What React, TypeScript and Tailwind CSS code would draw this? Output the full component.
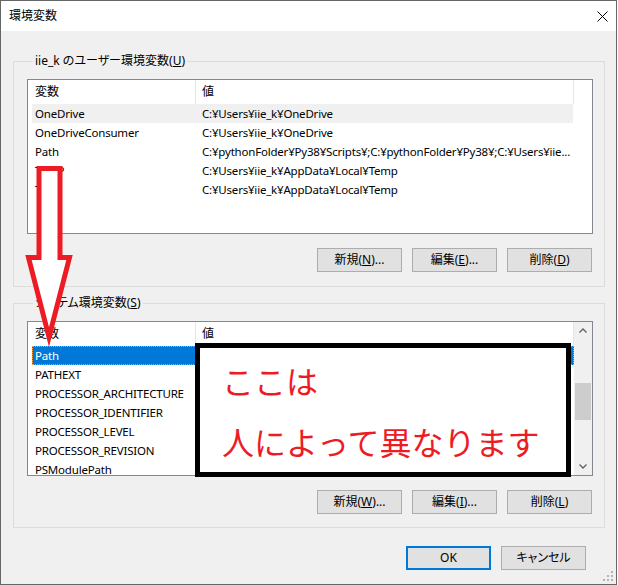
import type { ReactNode } from "react";

const ui = "font-['Noto_Sans','Noto_Sans_CJK_JP',sans-serif] [font-feature-settings:'palt']";

type Row = { name: string; value: string };

const userVars: Row[] = [
  { name: "OneDrive", value: "C:¥Users¥iie_k¥OneDrive" },
  { name: "OneDriveConsumer", value: "C:¥Users¥iie_k¥OneDrive" },
  { name: "Path", value: "C:¥pythonFolder¥Py38¥Scripts¥;C:¥pythonFolder¥Py38¥;C:¥Users¥iie..." },
  { name: "TEMP", value: "C:¥Users¥iie_k¥AppData¥Local¥Temp" },
  { name: "TMP", value: "C:¥Users¥iie_k¥AppData¥Local¥Temp" },
];

const systemVars: Row[] = [
  { name: "Path", value: "" },
  { name: "PATHEXT", value: "" },
  { name: "PROCESSOR_ARCHITECTURE", value: "" },
  { name: "PROCESSOR_IDENTIFIER", value: "" },
  { name: "PROCESSOR_LEVEL", value: "" },
  { name: "PROCESSOR_REVISION", value: "" },
  { name: "PSModulePath", value: "" },
];

function Key({ label, k, tail = "" }: { label: string; k: string; tail?: string }) {
  return (
    <>
      {label}(<span className="underline underline-offset-1">{k}</span>){tail}
    </>
  );
}

function Button({ children, primary }: { children: ReactNode; primary?: boolean }) {
  return (
    <button
      className={
        primary
          ? "w-[85px] h-[24px] bg-[#e1e1e1] border-2 border-[#0078d7] text-[12px] text-black"
          : "w-[85px] h-[24px] bg-[#e1e1e1] border border-[#adadad] text-[12px] text-black"
      }
    >
      {children}
    </button>
  );
}

function VarList({ rows, selected, hover, scroll }: { rows: Row[]; selected?: number; hover?: number; scroll?: boolean }) {
  return (
    <div className="h-[155px] border border-[#828790] bg-white flex overflow-hidden">
      <div className="w-[546px] flex flex-col">
        {/* header */}
        <div className="h-[24px] flex shrink-0">
          <div className="w-[168px] border-r border-[#e5e5e5] pl-[7px] flex items-center">変数</div>
          <div className="w-[378px] border-r border-[#e5e5e5] pl-[6px] flex items-center">値</div>
        </div>
        {rows.map((r, i) => (
          <div
            key={r.name}
            className={
              i === selected
                ? "ml-[4px] w-[542px] h-[19px] shrink-0 flex items-center text-[11.5px] tracking-[-0.2px] bg-[#0078d7] text-white outline-1 outline-dotted outline-[#f0a040] -outline-offset-1"
                : i === hover
                ? "ml-[4px] w-[541px] h-[19px] shrink-0 flex items-center text-[11.5px] tracking-[-0.2px] bg-[#f0f0f0]"
                : "ml-[4px] w-[541px] h-[19px] shrink-0 flex items-center text-[11.5px] tracking-[-0.2px]"
            }
          >
            <div className="w-[163px] pl-[3px] truncate">{r.name}</div>
            <div className="flex-1 min-w-0 pl-[7px] truncate">{r.value}</div>
          </div>
        ))}
      </div>
      {scroll && (
        <div className="w-[18px] bg-[#f0f0f0] flex flex-col">
          <div className="h-[17px] flex items-center justify-center">
            <svg width="8" height="5" viewBox="0 0 8 5">
              <path d="M0.5 4.5 L4 1 L7.5 4.5" fill="none" stroke="#606060" strokeWidth="1.3" />
            </svg>
          </div>
          <div className="flex-1 px-[1px]">
            <div className="mt-[44px] h-[37px] bg-[#cdcdcd]" />
          </div>
          <div className="h-[17px] flex items-center justify-center">
            <svg width="8" height="5" viewBox="0 0 8 5">
              <path d="M0.5 0.5 L4 4 L7.5 0.5" fill="none" stroke="#606060" strokeWidth="1.3" />
            </svg>
          </div>
        </div>
      )}
    </div>
  );
}

function Group({ title, children }: { title: ReactNode; children: ReactNode }) {
  return (
    <fieldset className="border border-[#dcdcdc] pl-[13px] pr-[11px] pt-[10px]">
      <legend className="ml-[6px] px-[2px] leading-[16px]">{title}</legend>
      {children}
    </fieldset>
  );
}

export default function App() {
  return (
    <div className={`relative w-[617px] h-[585px] border border-[#666] bg-[#f0f0f0] flex flex-col text-[12px] text-black ${ui}`}>
      {/* TITLE BAR */}
      <div className="h-[30px] bg-white flex items-center justify-between pl-[8px] pr-[8px]">
        <span>環境変数</span>
        <svg width="11" height="11" viewBox="0 0 11 11">
          <path d="M0.5 0.5 L10.5 10.5 M10.5 0.5 L0.5 10.5" stroke="#000" strokeWidth="1" />
        </svg>
      </div>

      {/* BODY */}
      <div className="flex-1 pl-[12px] pr-[11px] pt-[22px] flex flex-col">
        <Group title={<><span>iie_k のユーザー環境変数</span>(<span className="underline underline-offset-1">U</span>)</>}>
          <VarList rows={userVars} hover={0} />
          <div className="mt-[14px] mb-[14px] flex justify-end gap-[10px] mr-[1px]">
            <Button><Key label="新規" k="N" tail="..." /></Button>
            <Button><Key label="編集" k="E" tail="..." /></Button>
            <Button><Key label="削除" k="D" /></Button>
          </div>
        </Group>

        <div className="mt-[8px]">
          <Group title={<><span>システム環境変数</span>(<span className="underline underline-offset-1">S</span>)</>}>
            <VarList rows={systemVars} selected={0} scroll />
            <div className="mt-[14px] mb-[13px] flex justify-end gap-[10px] mr-[1px]">
              <Button><Key label="新規" k="W" tail="..." /></Button>
              <Button><Key label="編集" k="I" tail="..." /></Button>
              <Button><Key label="削除" k="L" /></Button>
            </div>
          </Group>
        </div>

        <div className="mt-[18px] flex justify-end gap-[10px] mr-[19px]">
          <Button primary>OK</Button>
          <Button>キャンセル</Button>
        </div>
      </div>

      {/* resize grip */}
      <svg className="absolute right-[2px] bottom-[2px]" width="11" height="11" viewBox="0 0 11 11">
        <g fill="#b4b4b4">
          <rect x="8" y="0" width="2" height="2" />
          <rect x="4" y="4" width="2" height="2" />
          <rect x="8" y="4" width="2" height="2" />
          <rect x="0" y="8" width="2" height="2" />
          <rect x="4" y="8" width="2" height="2" />
          <rect x="8" y="8" width="2" height="2" />
        </g>
      </svg>

      {/* annotation: red arrow */}
      <svg className="absolute left-[0px] top-[0px] pointer-events-none" width="617" height="585" viewBox="0 0 617 585">
        <polygon
          points="38,167.5 59,167.5 59,256.5 68.5,256.5 48,336 27.5,256.5 38,256.5"
          fill="#fff"
          stroke="#ed1c24"
          strokeWidth="5"
          strokeMiterlimit="10"
        />
      </svg>

      {/* annotation: boxed note */}
      <div className="absolute left-[194px] top-[342px] w-[376px] h-[134px] border-[5px] border-black bg-white pl-[22px] pt-[16px] flex flex-col gap-[29px] text-[32px] leading-[32px] text-[#ed1c24] font-['Noto_Sans_CJK_JP',sans-serif] [font-feature-settings:normal]">
        <span>ここは</span>
        <span>人によって異なります</span>
      </div>
    </div>
  );
}
